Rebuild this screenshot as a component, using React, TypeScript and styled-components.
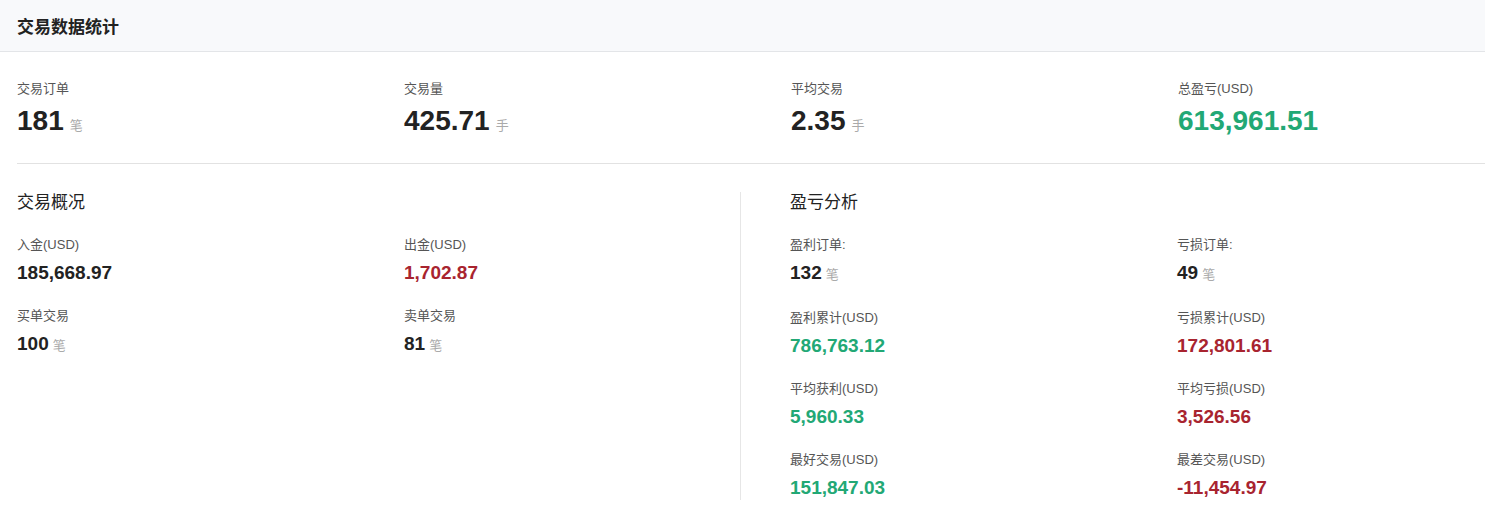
import React from 'react';
import styled, { createGlobalStyle } from 'styled-components';

const GlobalStyle = createGlobalStyle`
  body {
    margin: 0;
    background: #fff;
    font-family: Arial, "Liberation Sans", "Noto Sans CJK SC", sans-serif;
    color: #222;
  }
`;

type Tone = 'default' | 'up' | 'down';
const toneColor: Record<Tone, string> = { default: '#222', up: '#22a875', down: '#a8242f' };

const summary = [
  { label: '交易订单', value: '181', unit: '笔' },
  { label: '交易量', value: '425.71', unit: '手' },
  { label: '平均交易', value: '2.35', unit: '手' },
  { label: '总盈亏(USD)', value: '613,961.51', tone: 'up' as Tone },
];

const overview = [
  { label: '入金(USD)', value: '185,668.97' },
  { label: '出金(USD)', value: '1,702.87', tone: 'down' as Tone },
  { label: '买单交易', value: '100', unit: '笔' },
  { label: '卖单交易', value: '81', unit: '笔' },
];

const pnl = [
  { label: '盈利订单:', value: '132', unit: '笔' },
  { label: '亏损订单:', value: '49', unit: '笔' },
  { label: '盈利累计(USD)', value: '786,763.12', tone: 'up' as Tone },
  { label: '亏损累计(USD)', value: '172,801.61', tone: 'down' as Tone },
  { label: '平均获利(USD)', value: '5,960.33', tone: 'up' as Tone },
  { label: '平均亏损(USD)', value: '3,526.56', tone: 'down' as Tone },
  { label: '最好交易(USD)', value: '151,847.03', tone: 'up' as Tone },
  { label: '最差交易(USD)', value: '-11,454.97', tone: 'down' as Tone },
];

type Item = { label: string; value: string; unit?: string; tone?: Tone };

const App: React.FC = () => (
  <Page>
    <GlobalStyle />
    <Header>交易数据统计</Header>
    <Body>
      <SummaryRow>
        {summary.map(s => (
          <div key={s.label}>
            <Label>{s.label}</Label>
            <BigValue $tone={s.tone || 'default'}>
              {s.value}
              {s.unit && <Unit>{s.unit}</Unit>}
            </BigValue>
          </div>
        ))}
      </SummaryRow>
      <Sections>
        <Section>
          <SectionTitle>交易概况</SectionTitle>
          <StatGrid>
            {overview.map((s: Item) => <Stat key={s.label} item={s} />)}
          </StatGrid>
        </Section>
        <Section $divided>
          <SectionTitle>盈亏分析</SectionTitle>
          <StatGrid>
            {pnl.map((s: Item) => <Stat key={s.label} item={s} />)}
          </StatGrid>
        </Section>
      </Sections>
    </Body>
  </Page>
);

const Stat: React.FC<{ item: Item }> = ({ item }) => (
  <div>
    <Label>{item.label}</Label>
    <Value $tone={item.tone || 'default'}>
      {item.value}
      {item.unit && <Unit $small>{item.unit}</Unit>}
    </Value>
  </div>
);

const Page = styled.div`
  width: 1485px;
  overflow: hidden;
`;

const Header = styled.div`
  height: 52px;
  box-sizing: border-box;
  padding: 0 17px;
  display: flex;
  align-items: center;
  background: #f8f9fb;
  border-bottom: 1px solid #e3e5e8;
  font-size: 17px;
  font-weight: bold;
  color: #222;
`;

const Body = styled.div`
  padding-left: 17px;
`;

const SummaryRow = styled.div`
  display: grid;
  grid-template-columns: repeat(4, 387px);
  padding: 28px 0 20px;
  border-bottom: 1px solid #e2e2e2;
`;

const Label = styled.div`
  font-size: 13px;
  color: #555;
  line-height: 18px;
`;

const BigValue = styled.div<{ $tone: Tone }>`
  font-size: 28px;
  font-weight: bold;
  line-height: 34px;
  margin-top: 6px;
  color: ${p => toneColor[p.$tone]};
`;

const Value = styled.div<{ $tone: Tone }>`
  font-size: 19px;
  font-weight: bold;
  line-height: 24px;
  margin-top: 7px;
  color: ${p => toneColor[p.$tone]};
`;

const Unit = styled.span<{ $small?: boolean }>`
  font-size: 13px;
  font-weight: normal;
  color: #aaa;
  margin-left: ${p => (p.$small ? 4 : 6)}px;
`;

const Sections = styled.div`
  display: grid;
  grid-template-columns: 723px 1fr;
  padding: 28px 0 10px;
`;

const Section = styled.div<{ $divided?: boolean }>`
  ${p => p.$divided && `border-left: 1px solid #e6e6e6; padding-left: 49px;`}
`;

const SectionTitle = styled.div`
  font-size: 17px;
  line-height: 22px;
  color: #222;
  margin-bottom: 22px;
`;

const StatGrid = styled.div`
  display: grid;
  grid-template-columns: 387px 1fr;
  row-gap: 22px;
`;

export default App;
